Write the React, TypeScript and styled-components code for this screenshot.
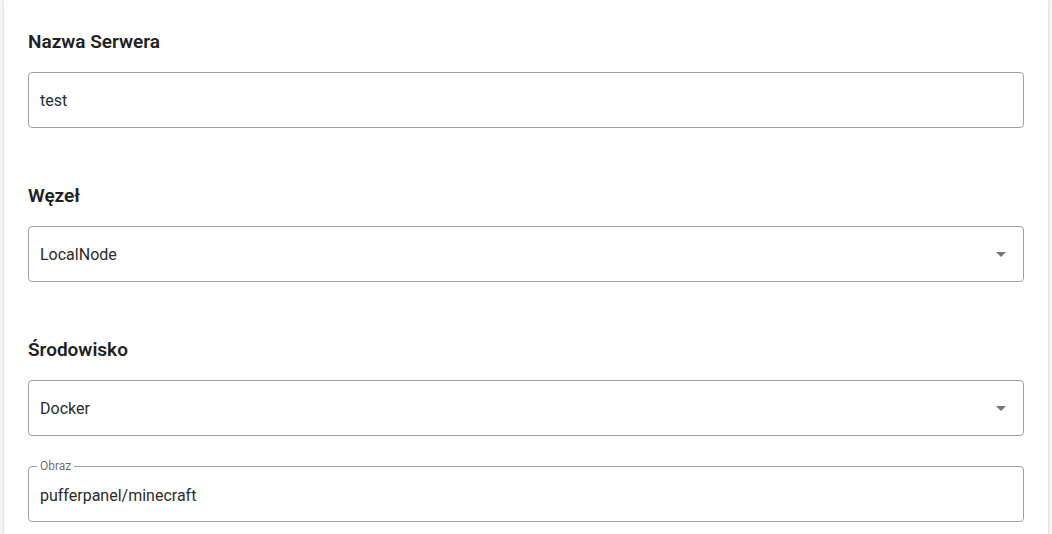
import styled, { createGlobalStyle } from 'styled-components';

const GlobalStyle = createGlobalStyle`
  html, body {
    margin: 0;
    padding: 0;
    background: #f5f5f5;
    font-family: Roboto, "Liberation Sans", sans-serif;
    color: rgba(0, 0, 0, 0.87);
  }
`;

const Page = styled.div`
  padding: 0 4px;
  height: 534px;
  overflow: hidden;
`;

const Card = styled.div`
  background: #fff;
  box-shadow: 0 2px 1px -1px rgba(0, 0, 0, 0.2), 0 1px 1px 0 rgba(0, 0, 0, 0.14),
    0 1px 3px 0 rgba(0, 0, 0, 0.12);
  padding: 30px 24px 40px;
  display: flex;
  flex-direction: column;
`;

const Section = styled.div<{ $last?: boolean }>`
  display: flex;
  flex-direction: column;
  margin-bottom: ${(p) => (p.$last ? '0' : '56px')};
`;

const Heading = styled.h3`
  margin: 0 0 18px;
  font-size: 19px;
  line-height: 24px;
  font-weight: 600;
  color: #212121;
`;

const Field = styled.div<{ $gap?: number }>`
  position: relative;
  height: 56px;
  border: 1px solid #9e9e9e;
  border-radius: 4px;
  box-sizing: border-box;
  display: flex;
  align-items: center;
  padding: 0 11px;
  margin-top: ${(p) => p.$gap ?? 0}px;
`;

const Value = styled.span`
  flex: 1;
  font-size: 16px;
  color: #2b2b2b;
`;

const Caret = styled.span`
  width: 0;
  height: 0;
  margin-right: 6px;
  border-left: 5px solid transparent;
  border-right: 5px solid transparent;
  border-top: 5px solid rgba(0, 0, 0, 0.54);
`;

// floating label sits on the top border, cutting a notch in it
const FloatLabel = styled.span`
  position: absolute;
  top: -7px;
  left: 8px;
  padding: 0 3px;
  background: #fff;
  font-size: 12px;
  line-height: 12px;
  color: rgba(0, 0, 0, 0.6);
`;

const OutlinedValue = styled(Value)`
  margin-top: 2px;
`;

export default function App() {
  return (
    <>
      <GlobalStyle />
      <Page>
        <Card>
          <Section>
            <Heading>Nazwa Serwera</Heading>
            <Field>
              <Value>test</Value>
            </Field>
          </Section>
          <Section>
            <Heading>Węzeł</Heading>
            <Field>
              <Value>LocalNode</Value>
              <Caret />
            </Field>
          </Section>
          <Section $last>
            <Heading>Środowisko</Heading>
            <Field>
              <Value>Docker</Value>
              <Caret />
            </Field>
            <Field $gap={30}>
              <FloatLabel>Obraz</FloatLabel>
              <OutlinedValue>pufferpanel/minecraft</OutlinedValue>
            </Field>
          </Section>
        </Card>
      </Page>
    </>
  );
}
